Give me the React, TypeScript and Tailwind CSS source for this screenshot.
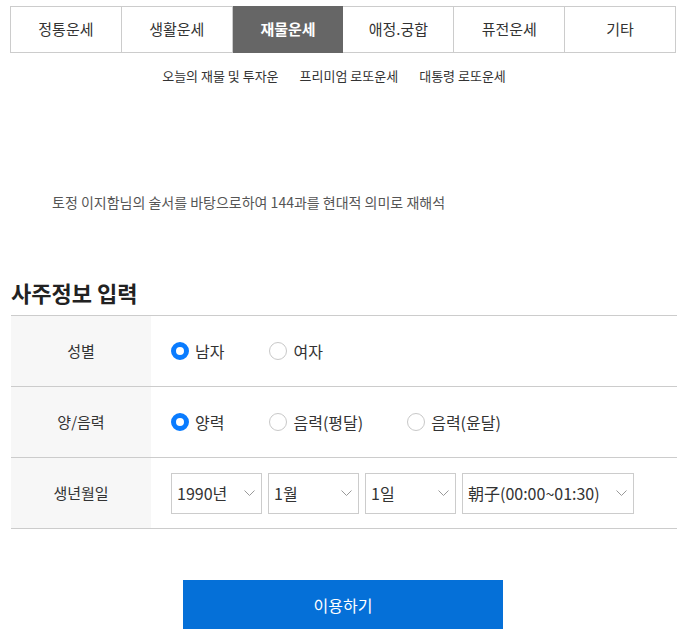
import React from "react";

const font = { fontFamily: '"Noto Sans CJK KR", "Noto Sans", sans-serif' };

function Radio({ checked, label, className = "" }: { checked?: boolean; label: string; className?: string }) {
  return (
    <div className={"flex items-center gap-[6px] " + className}>
      {checked ? (
        <div className="w-[18px] h-[18px] rounded-full border-[5px] border-[#0a7cff] bg-white box-border" />
      ) : (
        <div className="w-[18px] h-[18px] rounded-full border-[1.5px] border-[#c8c8c8] bg-white box-border" />
      )}
      <span className="text-[16px] text-[#333]">{label}</span>
    </div>
  );
}

function Chevron() {
  return (
    <svg width="11" height="6" viewBox="0 0 11 6" fill="none">
      <path d="M0.5 0.5 L5.5 5.5 L10.5 0.5" stroke="#999" strokeWidth="1" />
    </svg>
  );
}

function Select({ value, w }: { value: string; w: string }) {
  return (
    <div className={"h-[41px] border border-[#ccc] flex items-center justify-between pl-[5px] pr-[6px] bg-white " + w}>
      <span className="text-[16px] text-[#333]">{value}</span>
      <Chevron />
    </div>
  );
}

export default function App() {
  const tabs = ["정통운세", "생활운세", "재물운세", "애정.궁합", "퓨전운세", "기타"];
  return (
    <div style={font} className="w-[682px] h-[635px] bg-white pt-[6px] pl-[10px] overflow-hidden">
      <div className="flex w-[666px] border-t border-b border-l border-[#ccc] h-[47px]">
        {tabs.map((t, i) =>
          i === 2 ? (
            <div key={t} className="w-[111px] bg-[#666] text-white font-bold text-[15px] flex items-center justify-center -my-px">
              {t}
            </div>
          ) : (
            <div key={t} className="w-[111px] border-r border-[#ccc] text-[#333] text-[15px] flex items-center justify-center">
              {t}
            </div>
          )
        )}
      </div>
      <div className="mt-[14px] h-[18px] flex justify-center gap-[21px] text-[13px] leading-[18px] text-[#333] w-[666px] pr-[18px]">
        <span>오늘의 재물 및 투자운</span>
        <span>프리미엄 로또운세</span>
        <span>대통령 로또운세</span>
      </div>
      <div className="mt-[107px] pl-[42px] text-[14px] leading-[20px] text-[#555]">
        토정 이지함님의 술서를 바탕으로하여 144과를 현대적 의미로 재해석
      </div>
      <div className="mt-[66px] pl-px text-[22px] leading-[28px] font-bold text-[#222]">사주정보 입력</div>
      <div className="mt-[9px] ml-px w-[666px] border-t border-[#ccc]">
        <div className="flex h-[71px] border-b border-[#ccc]">
          <div className="w-[140px] bg-[#f7f7f7] flex items-center justify-center text-[15px] text-[#333]">성별</div>
          <div className="flex items-center pl-[20px]">
            <Radio checked label="남자" className="mr-[45px]" />
            <Radio label="여자" />
          </div>
        </div>
        <div className="flex h-[71px] border-b border-[#ccc]">
          <div className="w-[140px] bg-[#f7f7f7] flex items-center justify-center text-[15px] text-[#333]">양/음력</div>
          <div className="flex items-center pl-[20px]">
            <Radio checked label="양력" className="mr-[45px]" />
            <Radio label="음력(평달)" className="mr-[44px]" />
            <Radio label="음력(윤달)" />
          </div>
        </div>
        <div className="flex h-[71px] border-b border-[#ccc]">
          <div className="w-[140px] bg-[#f7f7f7] flex items-center justify-center text-[15px] text-[#333]">생년월일</div>
          <div className="flex items-center pl-[20px] gap-[6px]">
            <Select value="1990년" w="w-[91px]" />
            <Select value="1월" w="w-[91px]" />
            <Select value="1일" w="w-[91px]" />
            <Select value="朝子(00:00~01:30)" w="w-[172px]" />
          </div>
        </div>
      </div>
      <div className="w-[666px] flex justify-center mt-[51px]">
        <div className="w-[320px] h-[49px] bg-[#0570d8] text-white text-[16px] flex items-center justify-center">이용하기</div>
      </div>
    </div>
  );
}
